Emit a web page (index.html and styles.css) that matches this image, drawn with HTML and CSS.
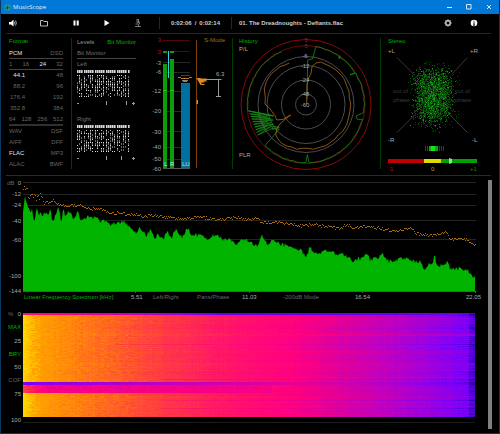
FILE: index.html
```html
<!DOCTYPE html>
<html lang="en">
<head>
<meta charset="utf-8">
<title>MusicScope</title>
<link rel="stylesheet" href="styles.css">
</head>
<body>
<div class="window">
  <header class="titlebar">
    <svg class="logo" viewBox="0 0 14 14"><circle cx="7" cy="7" r="6.5" fill="#2a9a90"/><path d="M4 10V6M7 11V3M10 9V5" fill="none" stroke="#04363d" stroke-width="1.5"/></svg>
    <span class="title">MusicScope</span>
    <button class="wbtn" aria-label="Minimize"><svg viewBox="0 0 6 6"><path d="M1 3.5h5"/></svg></button>
    <button class="wbtn" aria-label="Maximize"><svg viewBox="0 0 6 6"><path d="M.5 .5h4.500v4.500h-4.500z"/></svg></button>
    <button class="wbtn" aria-label="Close"><svg viewBox="0 0 6 6"><path d="M1 1l4 4M5 1l-4 4"/></svg></button>
  </header>

  <nav class="toolbar">
    <div class="tools">
      <button aria-label="Volume"><svg viewBox="0 0 8 8"><path d="M0 3h2l2.500-2.500v7L2 5.500H0z" fill="#fff"/><path d="M5.300 2.500q1 1.500 0 3M6.500 1.500q1.800 2.500 0 5" fill="none" stroke="#ccc" stroke-width=".8"/></svg></button>
      <button aria-label="Open"><svg viewBox="0 0 8 8"><path d="M.5 7V1.500h2.500l.7 1h3.800V7z" fill="none" stroke="#bbb"/></svg></button>
      <button aria-label="Pause"><svg viewBox="0 0 8 8"><path d="M1.500 1.500h2v5h-2zM4.700 1.500h2v5h-2z" fill="#fff"/></svg></button>
      <button aria-label="Play"><svg viewBox="0 0 8 8"><path d="M1.500 1l5 3-5 3z" fill="#fff"/></svg></button>
      <button aria-label="Analyze"><svg viewBox="0 0 8 8"><path d="M3 0h1.500v3.500H3zM4.500 2q2 1.500.5 3.500M1.500 5h3M1 7.500h6M4.500 5.500v2" fill="none" stroke="#999" stroke-width=".8"/></svg></button>
    </div>
    <div class="time"><span>0:02:06</span><span>/</span><span>0:02:14</span></div>
    <div class="track">01. The Dreadnoughts - Defiants.flac</div>
    <button aria-label="Settings"><svg viewBox="0 0 8 8"><circle cx="4" cy="4" r="2.200" fill="none" stroke="#ccc" stroke-width="1.400"/><path d="M4 .3v1.500M4 6.200v1.500M.3 4h1.500M6.200 4h1.500M1.400 1.400l1 1M5.600 5.600l1 1M1.400 6.600l1-1M5.600 2.400l1-1" stroke="#ccc"/></svg></button>
    <button class="info" aria-label="Information"><svg viewBox="0 0 8 8"><circle cx="4" cy="4" r="3.300" fill="#fff"/><path d="M4 1.700v1M4 3.300v3M3.200 6.200h1.600" stroke="#000"/></svg></button>
  </nav>

  <main>
    <div class="panels">
      <section class="format">
        <h2 class="on">Format</h2>
        <div class="row line"><b>PCM</b><span>DSD</span></div>
        <div class="row line"><span>1</span><span>16</span><b>24</b><span>32</span></div>
        <div class="row rate"><b>44.1</b><span>48</span></div>
        <div class="row rate"><span>88.2</span><span>96</span></div>
        <div class="row rate"><span>176.4</span><span>192</span></div>
        <div class="row rate"><span>352.8</span><span>384</span></div>
        <div class="row line thick"><span>64</span><span>128</span><span>256</span><span>512</span></div>
        <div class="row"><span>WAV</span><span>DSF</span></div>
        <div class="row"><span>AIFF</span><span>DFF</span></div>
        <div class="row"><b>FLAC</b><span>MP3</span></div>
        <div class="row"><span>ALAC</span><span>BWF</span></div>
      </section>

      <section class="levels">
        <div class="bits">
          <div class="tabs"><button>Levels</button><button class="on">Bit Monitor</button></div>
          <div class="row line"><span>Bit Monitor</span></div>
          <div class="row"><span>Left</span></div>
          <svg class="matrix" viewBox="0 0 59 44"><path id="bitsL" fill="#d8d8d8"/><path d="M0 33.500h2M29.500 31v4M49.500 31v4M55 33.500h3M56.500 32v3" stroke="#999"/></svg>
          <div class="row"><span>Right</span></div>
          <svg class="matrix" viewBox="0 0 59 44"><path id="bitsR" fill="#d8d8d8"/><path d="M0 33.500h2M29.500 31v4M44.500 31v4M55 33.500h3M56.500 32v3" stroke="#999"/></svg>
        </div>
        <svg class="meter" viewBox="144 34 88 141">
          <g shape-rendering="crispEdges">
            <path d="M163 40.500h27M163 51.500h27" stroke="#4b0808"/>
            <path d="M163 62.500h27M163 72.500h27M163 91.500h27M163 111.500h27M163 131.500h27M163 147.500h27M163 159.500h27" stroke="#292929"/>
            <path d="M163 168.500h27" stroke="#555"/>
            <path d="M163 64h4v104h-4zM170 59h4v109h-4zM163 51h4v2h-4zM170 51h4v2h-4z" fill="#0a9e0a"/>
            <path d="M163 90.500h4M170 90.500h4" stroke="#10d010"/>
            <path d="M168.500 51v27" stroke="#38c8f0"/>
            <path d="M181 83h9v85h-9z" fill="#0070a0"/>
            <path d="M181 75.500h9" stroke="#055870"/>
            <path d="M178 77.500h3M189 77.500h3M181 78.500h8" stroke="#c08020"/>
            <path d="M182 80h6v1h-6zM183 81h4v1h-4z" fill="#888"/>
            <path d="M196.500 40v128" stroke="#784208"/>
          </g>
          <path d="M196.500 78h4v.5h5l2 .5h10l6 .5-6 .5h-10l-2 .5 2 1h-4l1 1h-3v1.500h3v1h-4zM196.500 100h1.500v4h-1.500z" fill="#e08c20"/>
          <path d="M216 79.500h5M218.500 79.500v17M216 96.500h5" stroke="#999" fill="none"/>
          <g class="end"><text class="red" x="161" y="42">3</text><text class="red" x="161" y="54">0</text><text x="161" y="65">-3</text><text x="161" y="74">-6</text><text x="161" y="93">-12</text><text x="161" y="113">-20</text><text x="161" y="134">-30</text><text x="161" y="149">-40</text><text x="161" y="161">-50</text><text x="161" y="171">-60</text></g>
          <text class="orange" x="204" y="42">S-Mode</text><text x="216" y="76">6.3</text>
          <g class="bright"><text x="164" y="166">L</text><text x="170" y="166">R</text><text x="182" y="166">LU</text></g>
        </svg>
      </section>

      <section class="history">
        <svg viewBox="232 34 148 141">
          <g fill="none" stroke="#4c4c4c"><circle cx="306" cy="104.500" r="48"/><circle cx="306" cy="104.500" r="39"/><circle cx="306" cy="104.500" r="24.500"/><circle cx="306" cy="104.500" r="10.500"/></g>
          <g fill="none" stroke="#8a0a0a"><circle cx="306" cy="104.500" r="65"/><circle cx="306" cy="104.500" r="59" stroke="#6e0808"/></g>
          <path id="ringGreen" fill="none" stroke="#168a16" stroke-width=".8"/>
          <path id="ringOrange" fill="none" stroke="#a8691c" stroke-width=".8"/>
          <text class="green" x="239" y="43">History</text><text x="239" y="51">P/L</text><text x="239" y="157">PLR</text>
          <g class="mid"><text class="red" x="306" y="42">3</text><text class="red" x="306" y="48">0</text><text x="305" y="58">-6</text><text x="305" y="68">-12</text><text x="305" y="82">-24</text><text x="305" y="96">-48</text><text x="305" y="107">-60</text></g>
        </svg>
      </section>

      <section class="stereo">
        <svg viewBox="380 34 111 141">
          <path d="M397 57.500l18 18M467.500 57.500l-16 17M397 132.500l19-19M467.500 132.500l-20-20" stroke="#383838"/>
          <g class="dim"><text x="393" y="93">out of</text><text x="393" y="102">phase</text><text x="455" y="93">out of</text><text x="455" y="102">phase</text></g>
          <g id="cloud" shape-rendering="crispEdges"></g>
          <path d="M425 146h1v5h-1zM427 146h1v5h-1zM439 146h1v5h-1zM441 146h1v5h-1zM443 146h1v5h-1z" fill="#085808"/><path d="M429 146h9v5h-9z" fill="#0ca80c"/><path d="M431 146h4v5h-4z" fill="#18e018"/>
          <g shape-rendering="crispEdges"><path d="M388 159h36v4h-36z" fill="#c00000"/><path d="M424 159h17v4h-17z" fill="#dcdc00"/><path d="M441 159h36v4h-36z" fill="#00a000"/></g>
          <path d="M449 158l3 1v4l-3 1z" fill="#a8d8a8"/>
          <text class="green" x="388" y="43">Stereo</text>
          <text x="388" y="53">+L</text><text x="470" y="53">+R</text><text x="388" y="142">-R</text><text x="472" y="142">-L</text>
          <text class="red" x="388" y="171">-1</text><text class="olive" x="431" y="171">0</text><text class="lime" x="470" y="171">+1</text>
        </svg>
      </section>
    </div>

    <div class="analysis">
      <div class="charts">
        <svg class="spectrum" viewBox="6 176 475 117">
          <path d="M23 182.500h453M23 194.500h453M23 205.500h453M23 220.500h453M23 239.500h453" stroke="#242424" shape-rendering="crispEdges"/>
          <path id="area" fill="#00b400"/>
          <path id="peaks" fill="#a86c10" shape-rendering="crispEdges"/>
          <path d="M23 291.500h453M135.500 291v2M249.500 291v2M362.500 291v2M475.500 291v2" stroke="#555"/>
          <text class="grey" x="7" y="185">dB</text>
          <g class="end"><text x="21" y="185">0</text><text x="21" y="196">-12</text><text x="21" y="207">-24</text><text x="21" y="223">-40</text><text x="21" y="242">-60</text><text x="21" y="278">-100</text><text x="21" y="293">-144</text></g>
        </svg>
        <div class="modes">
          <button class="on">Linear Frequency Spectrum [kHz]</button><span>5.51</span><button>Left/Right</button><button>Pans/Phase</button><span>11.03</span><button>-200dB Mode</button><span>16.54</span><span>22.05</span>
        </div>
        <div class="spectro">
          <div class="scale">
            <div class="pair"><i>%</i><span>0</span></div><button class="on">MAX</button><span>25</span><button class="on">BRY</button><span>50</span><button>COF</button><span>75</span><span class="gap"></span><span>100</span>
          </div>
          <div class="plot"><canvas id="heat" width="452" height="104"></canvas></div>
        </div>
      </div>
      <div class="scroll"></div>
    </div>
  </main>
</div>
<script src="app.js"></script>
</body>
</html>
```

FILE: styles.css
```css
* { box-sizing: border-box; }
body {
  margin: 0;
  background: #000;
  color: #a8a8a8;
  font: 6px/8px "Liberation Sans Narrow", "Liberation Sans", sans-serif;
}
button {
  border: 0;
  padding: 0;
  background: none;
  color: inherit;
  font: inherit;
}
svg, canvas { display: block; }
text { fill: #a8a8a8; font-size: 6px; }
.window { border: 1px solid #07385f; border-top: 0; }

.titlebar {
  display: flex;
  align-items: center;
  height: 14px;
  padding: 0 0 0 3px;
  background: #0078d7;
  color: #e4f0fa;
}
.logo { width: 7px; height: 7px; }
.title { flex: 1; margin-left: 2px; font-family: "Open Sans", sans-serif; }
.wbtn { width: 20px; display: grid; place-items: center; }
.wbtn svg { width: 6px; height: 6px; fill: none; stroke: #d5e8f8; stroke-width: 1; }

.toolbar {
  display: flex;
  align-items: center;
  height: 20px;
  margin: 0 8px 0 5px;
  padding-bottom: 1px;
  border-bottom: 1px solid #004000;
  color: #ccc;
  font-weight: bold;
}
.toolbar svg { width: 8px; height: 8px; }
.tools { display: flex; justify-content: space-between; width: 153px; padding: 0 17px 0 3px; }
.time {
  display: flex;
  justify-content: space-between;
  width: 73px;
  padding: 2px 11px;
  border: solid #004000;
  border-width: 0 1px;
}
.track { flex: 1; padding-left: 7px; }
.info { margin: 0 13px 0 18px; }

.panels {
  display: grid;
  grid-template-columns: 65fr 161fr 148fr 111fr;
  margin: 0 8px 0 5px;
  border-bottom: 1px solid #004800;
}
.panels > section { position: relative; }
.panels > section + section::before {
  content: "";
  position: absolute;
  left: 0;
  top: 4px;
  bottom: 6px;
  width: 1px;
  background: #003c00;
}
.panels svg { width: 100%; }
h2 { margin: 0; font: inherit; }
.on, .green { color: #00b000; fill: #00b000; }
.format { padding: 3px 8px 0 3px; color: #666; }
.format h2, .tabs { height: 11px; line-height: 9px; }
.row { display: flex; justify-content: space-between; line-height: 11px; }
.format b { color: #e0e0e0; font-weight: normal; }
.line { border-bottom: 1px solid #444; line-height: 10px; }
.thick { border-bottom: 2px solid #303030; }
.rate > :first-child { width: 16px; text-align: right; }
.levels { display: grid; grid-template-columns: 73fr 88fr; }
.bits { padding: 3px 8px 0 6px; color: #707070; }
.tabs { display: flex; justify-content: space-between; color: #999; }
.red { fill: #b81414; }
.orange { fill: #a86810; }
.olive { fill: #b0b000; }
.lime { fill: #009800; }
.grey { fill: #666; }
.bright text { fill: #c8e8c8; }
.dim text { fill: #3a3a3a; }
.end { text-anchor: end; }
.mid { text-anchor: middle; }

.analysis { display: flex; margin: 0 7px 4px 5px; }
.charts { flex: 1; padding: 0 7px 5px 0; }
.spectrum { width: 100%; }
.modes {
  display: grid;
  grid-template-columns: 107fr 22fr 44fr 45fr 41fr 72fr 36fr 90fr;
  padding-left: 18px;
  line-height: 7px;
  color: #666;
  text-align: left;
}
.modes > * { min-width: 0; }
.modes button { text-align: left; white-space: nowrap; }
.modes span { color: #a8a8a8; padding-top: 1px; }
.modes span:last-child { text-align: right; }
.spectro { display: flex; padding: 10px 6px 0 0; }
.scale {
  display: flex;
  flex-direction: column;
  justify-content: space-between;
  align-items: flex-end;
  width: 17px;
  height: 113px;
  padding-right: 2px;
  line-height: 7px;
}
.pair { display: flex; justify-content: space-between; width: 13px; }
.pair i, .scale button { font-style: normal; color: #666; }
.scale .on { color: #00b000; }
.gap { height: 7px; }
.plot { flex: 1; margin: 2px 0 1px; padding-bottom: 5px; border-bottom: 1px solid #1c1c1c; }
.plot canvas { width: 100%; height: 104px; }
.scroll { width: 4px; margin-top: 4px; background: #808080; }
```

FILE: app.js
```js
// Deterministic noise source so every load draws the same signal.
let seed = 77;
const rnd = () => (seed = (seed * 1103515245 + 12345) % 2147483648) / 2147483648;
const set = (id, d) => document.getElementById(id).setAttribute('d', d);
const lerp = (pts, x) => {
  let i = 1;
  while (i < pts.length - 1 && pts[i][0] < x) i++;
  const a = pts[i - 1], b = pts[i];
  const t = Math.max(0, Math.min(1, (x - a[0]) / (b[0] - a[0])));
  return a.slice(1).map((v, k) => v + (b[k + 1] - v) * t);
};
const pairs = a => a.reduce((r, v, i) => (i % 2 ? r[r.length - 1].push(v) : r.push([v]), r), []);

// Bit monitor
for (const id of ['bitsL', 'bitsR']) {
  let d = '';
  for (let c = 0; c < 24; c++) {
    const x = Math.round(c * 2.2);
    d += `M${x} 0h1.600v3h-1.600z`;
    for (let r = 0; r < 15; r++)
      if (rnd() < 0.6) d += `M${x} ${5 + r * 1.5}h1v1h-1z`;
  }
  set(id, d);
}

// Spectrum, in thirds of a unit
const area = pairs([68,125,74,75,82,90,88,118,92,130,96,115,101,152,107,125,110,108,116,138,122,120,128,140,131,110,135,128,145,128,151,100,155,155,163,140,170,125,176,105,185,155,190,105,196,135,204,120,212,125,222,140,234,122,244,145,260,135,270,130,280,142,290,135,300,150,320,148,335,160,350,150,362,152,374,145,382,162,400,175,408,182,420,165,440,190,452,172,464,198,475,185,490,200,503,172,512,200,530,170,545,195,563,165,575,192,600,185,625,200,650,183,670,205,690,200,708,215,725,200,748,212,770,220,786,192,800,215,820,205,840,218,865,220,885,225,900,232,918,258,930,222,945,248,965,240,985,235,1010,250,1030,250,1060,265,1080,260,1098,243,1110,262,1135,255,1147,238,1155,262,1180,272,1195,258,1215,258,1240,270,1260,268,1272,290,1285,278,1298,282,1303,250,1310,282,1338,280,1342,262,1350,290,1370,288,1400,292,1410,305,1425,318]);
let d = 'M23 291';
for (let x = 69; x <= 1425; x += 3) {
  const y = lerp(area, x)[0] + (rnd() - 0.5) * 14;
  d += `L${x / 3} ${172 + y / 3}`;
}
set('area', d + 'L475 291z');

const peaks = pairs([68,50,80,50,86,75,100,75,120,72,125,72,131,105,137,88,150,92,160,82,175,98,210,100,240,97,260,110,290,108,330,123,365,122,385,130,405,125,430,132,470,130,510,137,560,138,600,134,640,140,680,140,700,135,750,142,770,140,790,150,830,150,900,160,940,157,1020,168,1040,157,1060,168,1095,162,1150,170,1190,175,1230,165,1245,183,1300,190,1340,180,1350,200,1400,200,1422,217]);
d = '';
for (let x = 69; x <= 1425; x += 3) {
  const y = lerp(peaks, x)[0] + (rnd() - 0.5) * (x < 135 ? 22 : 9);
  d += `M${x / 3} ${Math.round(172 + y / 3)}h1v1h-1z`;
}
set('peaks', d);

// History rings, thirds of a unit around the dial
const hist = (id, runs) => set(id, runs.map(r => 'M' + pairs(r).map(p => `${(230 + p[0] / 3).toFixed(1)} ${(34 + p[1] / 3).toFixed(1)}`).join('L')).join(''));
hist('ringOrange', [[230,211,231,150,235,134,243,118,246,98,258,87,272,84,285,90,300,97,318,108,334,124,343,136,350,155,357,172,358,190,362,210,360,230,356,250,350,272,338,292,325,303,315,315,298,328,285,336,265,341,250,346,232,343,215,343,200,346,185,339,170,336,155,328,145,316,137,303,140,285,150,270,165,256,182,243,172,248,160,256,140,258,135,245,125,232,119,223,105,210,106,190,103,165,108,145,115,132,125,118,138,108,150,98,165,93,178,87]]);
const arc = (from, to) => {
  const out = [];
  for (let a = from; a <= to; a += 3) {
    const t = a * Math.PI / 180, r = 175 + (rnd() - 0.5) * 3;
    out.push(228 + r * Math.sin(t), 211 - r * Math.cos(t));
  }
  return out;
};
const zig = [];
for (let i = 0; i < 10; i++) zig.push(130 - i % 3 * 8, 282 - i * 4, 53 + (10 - i) * 3, 303 - i * 8);
hist('ringGreen', [[231,195,233,78,247,75,252,60,257,38,...arc(10,35),328,75,330,65,...arc(36,58),360,122,378,118,...arc(62,98),378,246,382,256,398,256,...arc(105,178),232,362,228,385,...arc(181,222),105,335,148,285,125,285,148,280,120,275,...zig,130,245,53,230,53,218,...arc(272,336)]]);

// Goniometer cloud
const cloud = { '#084008': '', '#0b650b': '', '#1c981c': '' };
const tones = Object.keys(cloud);
const soft = k => (rnd() * 2 - 1) * (1 - k) + (rnd() + rnd() - 1) * k * 1.6;
for (let i = 0; i < 2600; i++) {
  const v = soft(.35), u = soft(.4);
  const x = Math.round(433 + u * 24 * (1 - .15 * (1 - Math.abs(v)))), y = Math.round(96 + v * 31);
  cloud[tones[Math.floor(rnd() * rnd() * 3)]] += `M${x} ${y}h1v1h-1z`;
}
document.getElementById('cloud').innerHTML = tones.map(t => `<path fill="${t}" d="${cloud[t]}"/>`).join('');

// Spectrogram
const palette = [[0,255,215,0],[.03,255,160,0],[.12,255,128,15],[.2,255,98,35],[.3,255,60,65],[.45,255,20,105],[.6,255,0,128],[.72,218,0,160],[.82,188,0,195],[.92,150,0,228],[1,115,0,255],[1.1,50,0,170]];
const cv = document.getElementById('heat'), g = cv.getContext('2d');
const W = cv.width, H = cv.height, img = g.createImageData(W, H);
const cols = Array.from({ length: W }, () => (rnd() - 0.5) * 0.025);
for (let y = 0; y < H; y++) {
  const rowShift = (rnd() - 0.5) * 0.07;
  let n = 0;
  for (let x = 0; x < W; x++) {
    const f = x / W;
    if (x % 3 === 0) n = (rnd() - 0.5) * (f < .25 ? 0.07 : 0.04);
    let p = f + n * Math.min(1, f * 8 + .15) + cols[x] * Math.min(1, f * 10) + rowShift * Math.min(1, f * 2);
    if (y < 2) p = Math.max(p, Math.min(.97, f * 1.2 + .45)) + .05;
    if (y >= 69 && y < 72) p = Math.max(p + .04, .98 - f * .5 + n);
    if (y >= 72 && y < 80 && f < .55) p = Math.max(p, .3 + Math.min(.33, f * 6) + n * 2);
    if (y === 31 && f > .2) p += .08;
    if ((y === 66 || y === 87 || y === 95) && f > .3) p += .08;
    if (y === 21 || y === 22) p -= .08 * f;
    if (f > .985) p += .05;
    const c = lerp(palette, Math.max(0, Math.min(1.1, p)));
    img.data.set([c[0], c[1], c[2], 255], (y * W + x) * 4);
  }
}
g.putImageData(img, 0, 0);
```
